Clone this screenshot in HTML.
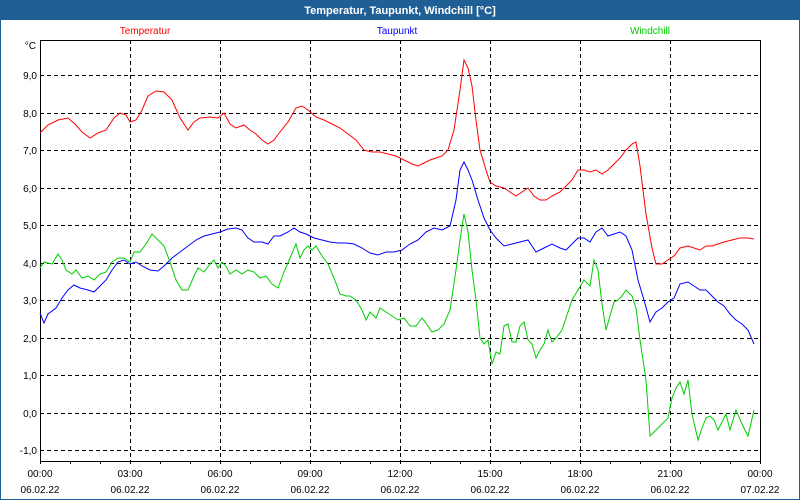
<!DOCTYPE html>
<html><head><meta charset="utf-8"><style>
html,body{margin:0;padding:0;width:800px;height:500px;overflow:hidden;background:#fff;font-family:"Liberation Sans",sans-serif}
</style></head><body>
<svg width="800" height="500" xmlns="http://www.w3.org/2000/svg" font-family="Liberation Sans, sans-serif" font-size="10">
<rect x="0" y="0" width="800" height="500" fill="#fff"/>
<rect x="0.5" y="0.5" width="799" height="499" fill="none" stroke="#1f5f96" stroke-width="1"/>
<rect x="0" y="0" width="800" height="20" fill="#1f5f96"/>
<text x="400" y="14" text-anchor="middle" fill="#fff" font-weight="bold" font-size="11">Temperatur, Taupunkt, Windchill [°C]</text>
<text x="145" y="34" text-anchor="middle" fill="#ff0000">Temperatur</text>
<text x="397" y="34" text-anchor="middle" fill="#0000ff">Taupunkt</text>
<text x="650" y="34" text-anchor="middle" fill="#00cc00">Windchill</text>
<text x="36" y="49" text-anchor="end" fill="#000">°C</text>
<g stroke="#000" stroke-width="1" stroke-dasharray="4,3" fill="none">
<path d="M40 75.5H760M40 113.5H760M40 150.5H760M40 188.5H760M40 225.5H760M40 263.5H760M40 300.5H760M40 338.5H760M40 375.5H760M40 413.5H760M40 450.5H760"/>
<path d="M130.5 40V461M220.5 40V461M310.5 40V461M400.5 40V461M490.5 40V461M580.5 40V461M670.5 40V461"/>
</g>
<rect x="40.5" y="40.5" width="720" height="421" fill="none" stroke="#000"/>
<g stroke="#000"><path d="M40.5 461V464M70.5 461V464M100.5 461V464M130.5 461V464M160.5 461V464M190.5 461V464M220.5 461V464M250.5 461V464M280.5 461V464M310.5 461V464M340.5 461V464M370.5 461V464M400.5 461V464M430.5 461V464M460.5 461V464M490.5 461V464M520.5 461V464M550.5 461V464M580.5 461V464M610.5 461V464M640.5 461V464M670.5 461V464M700.5 461V464M730.5 461V464M760.5 461V464"/></g>
<g fill="#000" text-anchor="end">
<text x="37" y="79">9,0</text><text x="37" y="117">8,0</text><text x="37" y="154">7,0</text><text x="37" y="192">6,0</text><text x="37" y="229">5,0</text><text x="37" y="267">4,0</text><text x="37" y="304">3,0</text><text x="37" y="342">2,0</text><text x="37" y="379">1,0</text><text x="37" y="417">0,0</text><text x="37" y="454">-1,0</text>
</g>
<g fill="#000" text-anchor="middle">
<text x="40" y="477">00:00</text><text x="130" y="477">03:00</text><text x="220" y="477">06:00</text><text x="310" y="477">09:00</text><text x="400" y="477">12:00</text><text x="490" y="477">15:00</text><text x="580" y="477">18:00</text><text x="670" y="477">21:00</text><text x="760" y="477">00:00</text>
<text x="40" y="493">06.02.22</text><text x="130" y="493">06.02.22</text><text x="220" y="493">06.02.22</text><text x="310" y="493">06.02.22</text><text x="400" y="493">06.02.22</text><text x="490" y="493">06.02.22</text><text x="580" y="493">06.02.22</text><text x="670" y="493">06.02.22</text><text x="760" y="493">07.02.22</text>
</g>
<polyline fill="none" stroke="#ff0000" stroke-width="1" points="40,133 48,125 58,120 68,118 75,124 82,132 90,138 98,133 106,130 114,118 120,113 126,115 130,122 136,120 142,110 148,96 156,91 164,92 172,100 180,118 188,130 194,122 200,118 210,117 218,118 224,113 230,124 236,128 244,125 250,130 256,134 262,140 268,144 274,140 280,132 288,122 296,108 302,106 308,110 316,117 324,120 332,124 340,128 348,134 356,140 364,150 372,152 380,152 388,154 396,156 404,160 412,164 418,166 424,163 430,160 436,158 442,156 448,150 454,130 460,90 464,60 468,68 472,86 476,120 480,150 486,170 490,182 496,186 504,188 510,192 516,196 522,192 528,188 534,196 540,200 546,200 552,196 560,192 566,186 572,180 578,170 584,170 590,172 596,170 602,174 608,170 614,164 620,158 626,150 632,144 636,142 640,166 646,214 652,248 656,264 662,264 668,260 674,256 680,248 688,246 694,248 700,250 706,246 712,246 718,244 724,242 732,240 740,238 748,238 754,239"/>
<polyline fill="none" stroke="#0000ff" stroke-width="1" points="40,313 44,323 48,314 56,308 62,298 68,290 74,285 80,288 88,290 94,292 100,286 106,280 112,270 118,262 124,260 130,264 136,262 142,266 150,270 158,271 164,266 172,258 180,252 188,246 196,240 204,236 212,234 220,232 228,229 236,228 242,230 248,238 254,242 262,242 268,244 274,236 280,236 288,232 294,228 300,232 306,234 314,238 322,240 330,242 338,243 346,243 354,244 362,248 370,253 378,255 386,252 394,252 402,250 410,244 418,240 426,232 434,228 442,230 450,226 456,200 460,170 464,162 468,170 472,180 478,200 484,218 490,230 496,238 504,246 512,244 520,242 528,240 536,252 544,248 552,244 560,248 566,250 572,244 578,238 584,238 590,242 596,232 602,228 608,236 614,234 620,232 626,236 632,250 638,280 644,300 650,322 656,312 662,308 668,302 674,298 680,284 688,282 694,286 700,290 706,290 712,296 718,302 724,306 730,314 736,320 742,324 748,330 754,344"/>
<polyline fill="none" stroke="#00cc00" stroke-width="1" points="40,268 44,262 52,264 58,254 62,260 66,270 72,274 76,270 82,278 88,276 94,280 100,274 106,272 112,262 118,258 124,258 130,262 134,252 140,252 146,244 152,234 158,240 164,246 170,262 176,280 182,290 188,290 194,276 198,268 204,272 210,264 214,260 218,268 222,262 226,266 230,274 236,270 242,274 248,270 254,272 260,278 266,276 272,284 278,288 284,272 290,258 296,244 300,258 304,250 308,246 312,250 316,246 322,256 328,264 334,278 340,294 346,296 350,296 356,300 362,310 366,320 370,312 376,318 380,308 386,312 392,316 398,320 404,318 410,326 416,326 422,318 428,326 432,332 438,330 444,324 450,310 456,270 460,240 464,214 468,232 472,270 476,300 480,338 484,344 488,340 492,364 496,352 500,354 504,326 508,324 512,342 516,342 520,326 524,322 528,340 532,344 536,358 540,350 544,344 548,330 552,342 556,338 562,330 566,318 572,300 578,290 584,280 590,286 594,260 598,270 602,304 606,330 610,316 614,302 618,300 622,296 626,290 632,296 636,308 640,340 646,380 650,436 656,430 662,424 668,418 672,398 676,388 680,382 684,394 688,380 692,414 698,440 702,428 706,418 710,416 714,420 718,430 722,422 726,414 730,430 736,410 742,424 748,436 754,410"/>
</svg>
</body></html>
